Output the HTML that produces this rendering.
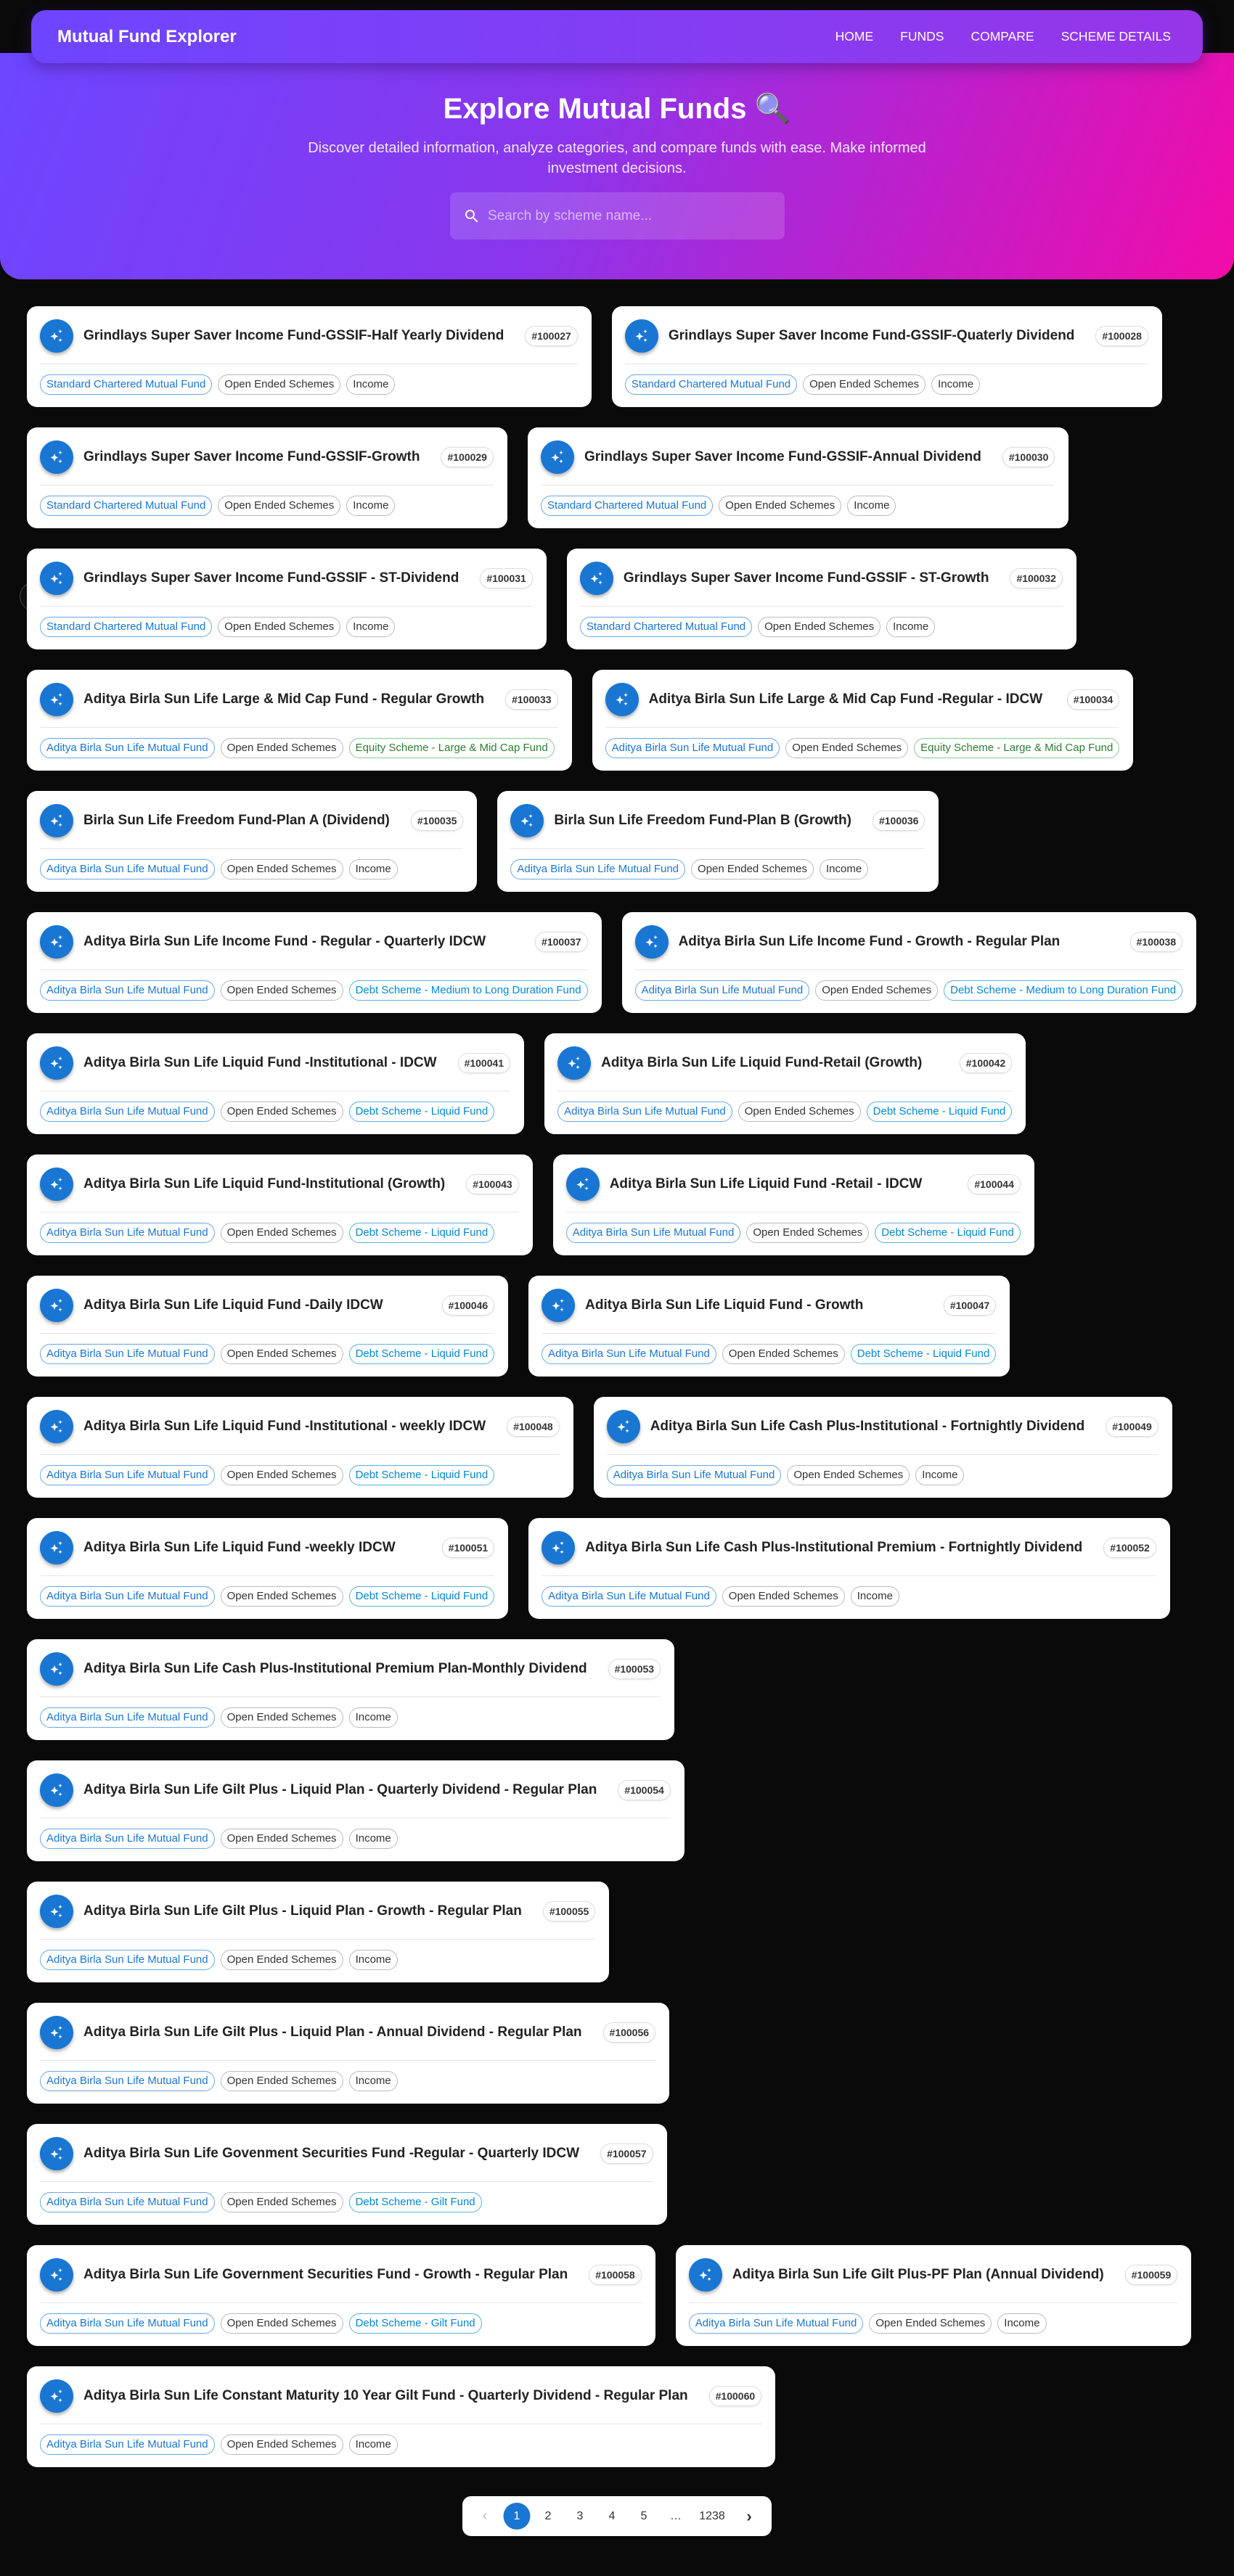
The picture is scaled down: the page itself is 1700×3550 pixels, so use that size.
<!DOCTYPE html>
<html><head><meta charset="utf-8"><style>
*{box-sizing:border-box;margin:0;padding:0}
body{width:1700px;height:3550px;background:#0a0a0a;font-family:"Liberation Sans",Arial,sans-serif;position:relative;overflow:hidden}
.hero{position:absolute;left:0;top:73px;width:1700px;height:312px;border-radius:0 0 30px 30px;background:linear-gradient(110deg,#6d46ff 0%,#8a36ec 45%,#c21ec8 75%,#f20ca9 100%)}
.nav{position:absolute;left:43px;top:14px;width:1614px;height:73px;border-radius:20px;background:linear-gradient(90deg,#6e45ff,#9636e8);box-shadow:0 6px 20px rgba(60,20,120,.5);display:flex;align-items:center;padding:0 44px 0 36px;color:#fff}
.nav .brand{font-size:24px;font-weight:bold;flex:1}
.nav a{color:#fff;font-size:17.5px;margin-left:37px;text-decoration:none}
h1{position:absolute;top:126px;width:1700px;text-align:center;color:#fff;font-size:40px}
.sub{position:absolute;top:190px;left:420px;width:860px;text-align:center;color:#f0e6ff;font-size:20px;line-height:28px}
.search{position:absolute;left:620px;top:265px;width:461px;height:65px;border-radius:8px;background:rgba(255,255,255,.15);display:flex;align-items:center;padding-left:18px;color:rgba(255,255,255,.6);font-size:19px}
.search svg{margin-right:10px}
.list{position:absolute;left:37px;top:422px}
.row{display:flex;gap:28px;margin-bottom:28px;height:139px}
.card{background:#fff;border-radius:14px;padding:18px 19px 0 18px;height:139px;white-space:nowrap}
.hd{display:flex;align-items:center;height:46px}
.ic{width:46px;height:46px;border-radius:50%;background:#1976d2;box-shadow:0 3px 5px rgba(0,0,0,.3);display:flex;align-items:center;justify-content:center;flex:none}
.t{font-size:19px;font-weight:bold;color:#222;margin-left:14px;flex:1}
.b{margin-left:29px;border:1px solid #ddd;border-radius:14px;padding:0 8px;height:28px;line-height:27px;font-size:14px;font-weight:bold;color:#333;box-shadow:0 1px 2px rgba(0,0,0,.1)}
.dv{height:1px;background:#e6e6e6;margin:15px 0 14px}
.ch{display:flex;gap:8px}
.c{height:28px;line-height:26px;border:1px solid #bbb;border-radius:14px;padding:0 8px;font-size:15px;color:#333}
.c.p{border-color:#6aa6e6;color:#1976d2}
.c.g{border-color:#8bc98d;color:#2e7d32}
.c.d{border-color:#5ab0e0;color:#0288d1}
.pg{position:absolute;left:637px;top:3440px;width:426px;height:55px;background:#fff;border-radius:12px;display:flex;align-items:center;font-size:16px;color:#333}
.pg span{position:absolute;transform:translateX(-50%)}
.pg .a{width:37px;height:37px;border-radius:50%;background:#1976d2;color:#fff;display:flex;align-items:center;justify-content:center;transform:translate(-50%,0);top:9px}
.nx{position:absolute;left:27px;top:802px;width:40px;height:40px;border-radius:50%;background:#111;border:1px solid #444;color:#fff;font-size:19px;display:flex;align-items:center;justify-content:center}
</style></head><body>
<div class="hero"></div>
<div class="nav"><div class="brand">Mutual Fund Explorer</div><a>HOME</a><a>FUNDS</a><a>COMPARE</a><a>SCHEME DETAILS</a></div>
<h1>Explore Mutual Funds 🔍</h1>
<div class="sub">Discover detailed information, analyze categories, and compare funds with ease. Make informed investment decisions.</div>
<div class="search"><svg width="24" height="24" viewBox="0 0 24 24"><path fill="#fff" d="M15.5 14h-.79l-.28-.27A6.47 6.47 0 0 0 16 9.5 6.5 6.5 0 1 0 9.5 16c1.61 0 3.09-.59 4.23-1.57l.27.28v.79l5 4.99L20.49 19zm-6 0C7.01 14 5 11.99 5 9.5S7.01 5 9.5 5 14 7.01 14 9.5 11.99 14 9.5 14"/></svg>Search by scheme name...</div>
<div class="nx">N</div>
<div class="list" id="l"></div>
<div class="pg">
<span style="left:31px;color:#bbb;font-size:20px">‹</span>
<span class="a" style="left:75px">1</span>
<span style="left:118px">2</span><span style="left:162px">3</span><span style="left:206px">4</span><span style="left:250px">5</span><span style="left:294px">…</span><span style="left:344px">1238</span>
<span style="left:395px;font-size:22px;font-weight:bold">›</span>
</div>
<script>
const S='Standard Chartered Mutual Fund',A='Aditya Birla Sun Life Mutual Fund';
const I=['Income',''],E=['Equity Scheme - Large & Mid Cap Fund','g'],M=['Debt Scheme - Medium to Long Duration Fund','d'],L=['Debt Scheme - Liquid Fund','d'],G=['Debt Scheme - Gilt Fund','d'];
const G0='Grindlays Super Saver Income Fund-GSSIF',AB='Aditya Birla Sun Life ';
const rows=[
[[G0+'-Half Yearly Dividend',27,S,I],[G0+'-Quaterly Dividend',28,S,I]],
[[G0+'-Growth',29,S,I],[G0+'-Annual Dividend',30,S,I]],
[[G0+' - ST-Dividend',31,S,I],[G0+' - ST-Growth',32,S,I]],
[[AB+'Large & Mid Cap Fund - Regular Growth',33,A,E],[AB+'Large & Mid Cap Fund -Regular - IDCW',34,A,E]],
[['Birla Sun Life Freedom Fund-Plan A (Dividend)',35,A,I],['Birla Sun Life Freedom Fund-Plan B (Growth)',36,A,I]],
[[AB+'Income Fund - Regular - Quarterly IDCW',37,A,M],[AB+'Income Fund - Growth - Regular Plan',38,A,M]],
[[AB+'Liquid Fund -Institutional - IDCW',41,A,L],[AB+'Liquid Fund-Retail (Growth)',42,A,L]],
[[AB+'Liquid Fund-Institutional (Growth)',43,A,L],[AB+'Liquid Fund -Retail - IDCW',44,A,L]],
[[AB+'Liquid Fund -Daily IDCW',46,A,L],[AB+'Liquid Fund - Growth',47,A,L]],
[[AB+'Liquid Fund -Institutional - weekly IDCW',48,A,L],[AB+'Cash Plus-Institutional - Fortnightly Dividend',49,A,I]],
[[AB+'Liquid Fund -weekly IDCW',51,A,L],[AB+'Cash Plus-Institutional Premium - Fortnightly Dividend',52,A,I]],
[[AB+'Cash Plus-Institutional Premium Plan-Monthly Dividend',53,A,I]],
[[AB+'Gilt Plus - Liquid Plan - Quarterly Dividend - Regular Plan',54,A,I]],
[[AB+'Gilt Plus - Liquid Plan - Growth - Regular Plan',55,A,I]],
[[AB+'Gilt Plus - Liquid Plan - Annual Dividend - Regular Plan',56,A,I]],
[[AB+'Govenment Securities Fund -Regular - Quarterly IDCW',57,A,G]],
[[AB+'Government Securities Fund - Growth - Regular Plan',58,A,G],[AB+'Gilt Plus-PF Plan (Annual Dividend)',59,A,I]],
[[AB+'Constant Maturity 10 Year Gilt Fund - Quarterly Dividend - Regular Plan',60,A,I]]];
const ic='<svg width="24" height="24" viewBox="0 0 24 24"><path fill="#fff" d="M9 7l1.6 3.9L14.5 12.5l-3.9 1.6L9 18l-1.6-3.9L3.5 12.5l3.9-1.6zM17 3l.8 1.9 1.9.8-1.9.8L17 8.4l-.8-1.9-1.9-.8 1.9-.8zM17 15l.8 1.9 1.9.8-1.9.8-.8 1.9-.8-1.9-1.9-.8 1.9-.8z"/></svg>';
let h='';
for(const r of rows){h+='<div class="row">';for(const c of r){h+=`<div class="card"><div class="hd"><div class="ic">${ic}</div><div class="t">${c[0].replace(/&/g,'&amp;')}</div><div class="b">#1000${c[1]}</div></div><div class="dv"></div><div class="ch"><div class="c p">${c[2]}</div><div class="c">Open Ended Schemes</div><div class="c ${c[3][1]}">${c[3][0].replace(/&/g,'&amp;')}</div></div></div>`;}h+='</div>';}
document.getElementById('l').innerHTML=h;
</script>
</body></html>
